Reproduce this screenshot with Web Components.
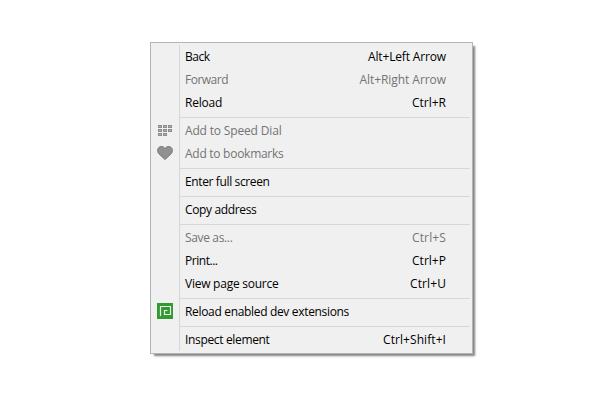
<!DOCTYPE html>
<html lang="en">
<head>
<meta charset="utf-8">
<title>Context menu</title>
<style>
html, body { margin: 0; height: 100%; background: #fff; overflow: hidden; }
body { font: 12px/23px "Open Sans", "Noto Sans", sans-serif; color: #000; }
</style>
</head>
<body>
<context-menu>
  <menu-item width="24.5" keys="Alt+Left Arrow" keys-width="78">Back</menu-item>
  <menu-item disabled width="43" keys="Alt+Right Arrow" keys-width="86.5">Forward</menu-item>
  <menu-item width="37" keys="Ctrl+R" keys-width="34">Reload</menu-item>
  <menu-separator></menu-separator>
  <menu-item disabled width="96.5"><menu-icon slot="icon" name="dial"></menu-icon>Add to Speed Dial</menu-item>
  <menu-item disabled width="98.5"><menu-icon slot="icon" name="heart"></menu-icon>Add to bookmarks</menu-item>
  <menu-separator></menu-separator>
  <menu-item width="84.5">Enter full screen</menu-item>
  <menu-separator></menu-separator>
  <menu-item width="71.5">Copy address</menu-item>
  <menu-separator></menu-separator>
  <menu-item disabled width="47.5" keys="Ctrl+S" keys-width="34">Save as...</menu-item>
  <menu-item width="32.5" keys="Ctrl+P" keys-width="34">Print...</menu-item>
  <menu-item width="93.5" keys="Ctrl+U" keys-width="36">View page source</menu-item>
  <menu-separator></menu-separator>
  <menu-item width="164"><menu-icon slot="icon" name="spiral"></menu-icon>Reload enabled dev extensions</menu-item>
  <menu-separator></menu-separator>
  <menu-item width="84.5" keys="Ctrl+Shift+I" keys-width="63">Inspect element</menu-item>
</context-menu>
<script>
class ContextMenu extends HTMLElement {
  constructor() {
    super();
    this.attachShadow({ mode: 'open' }).innerHTML = `
      <style>
        :host { display: block; box-sizing: border-box; width: 323px; margin: 42px 0 0 150px;
          padding: 2px; border: 1px solid #b5b5b5; background: #f0f0f0;
          box-shadow: 3px 3px 2px -1px rgba(0,0,0,.5); }
        .list { background: linear-gradient(#d7d7d7, #d7d7d7) 26px 0 / 1px 100% no-repeat; }
      </style>
      <div class="list"><slot></slot></div>`;
  }
}
class MenuSeparator extends HTMLElement {
  constructor() {
    super();
    this.attachShadow({ mode: 'open' }).innerHTML = `
      <style>
        :host { display: block; height: 5px; padding: 3px 0 0 27px; box-sizing: border-box; }
        div { height: 1px; background: #d7d7d7; }
      </style><div></div>`;
  }
}
class MenuItem extends HTMLElement {
  constructor() {
    super();
    this.attachShadow({ mode: 'open' }).innerHTML = `
      <style>
        :host { display: grid; grid-template-columns: 32px 1fr auto; height: 23px;
          padding-right: 24px; box-sizing: border-box; white-space: nowrap; }
        :host([disabled]) { color: #747474; }
        .icon { padding: 3px 0 0 4px; }
        .label, .keys { justify-self: start; }
      </style>
      <span class="icon"><slot name="icon"></slot></span>
      <span class="label"><slot></slot></span>
      <span class="keys"></span>`;
  }
  connectedCallback() {
    const label = this.shadowRoot.querySelector('.label');
    const keys = this.shadowRoot.querySelector('.keys');
    keys.textContent = this.getAttribute('keys') || '';
    this.fit(label, this.textContent.trim().length, this.getAttribute('width'));
    this.fit(keys, keys.textContent.length, this.getAttribute('keys-width'));
  }
  // Spread the difference to the wanted width over the letters.
  fit(el, count, width) {
    if (!width || !count) return;
    const natural = el.getBoundingClientRect().width;
    el.style.letterSpacing = (Number(width) - natural) / count + 'px';
  }
}
const cells = [[1,3],[6,3],[11,3],[1,7],[6,7],[11,7],[1,11],[6,11]];
const ICONS = {
  dial: cells.map(([x, y]) => `<rect x="${x + .5}" y="${y + .5}" width="3" height="2" fill="#b2b2b2" stroke="#8c8c8c"/>`).join(''),
  heart: `<path d="M8 14.5 L1.8 8.7 C-.3 6.2 .3 1.9 4.2 1.5 C6 1.4 7.4 2.3 8 3.7 C8.6 2.3 10 1.4 11.8 1.5 C15.7 1.9 16.3 6.2 14.2 8.7 Z" fill="#919191" stroke="#777"/>`,
  spiral: `<rect width="16" height="16" fill="#339933"/><path d="M3.5 13V3.5H13.5V11.5H7.5V7.5H10.5" fill="none" stroke="#e6f3e6" stroke-width="1.2"/>`
};
class MenuIcon extends HTMLElement {
  constructor() {
    super();
    this.attachShadow({ mode: 'open' }).innerHTML = `
      <style>:host { display: block; width: 16px; height: 16px; } svg { display: block; }</style>
      <svg width="16" height="16" viewBox="0 0 16 16">${ICONS[this.getAttribute('name')]}</svg>`;
  }
}
customElements.define('context-menu', ContextMenu);
customElements.define('menu-separator', MenuSeparator);
customElements.define('menu-icon', MenuIcon);
customElements.define('menu-item', MenuItem);
</script>
</body>
</html>
